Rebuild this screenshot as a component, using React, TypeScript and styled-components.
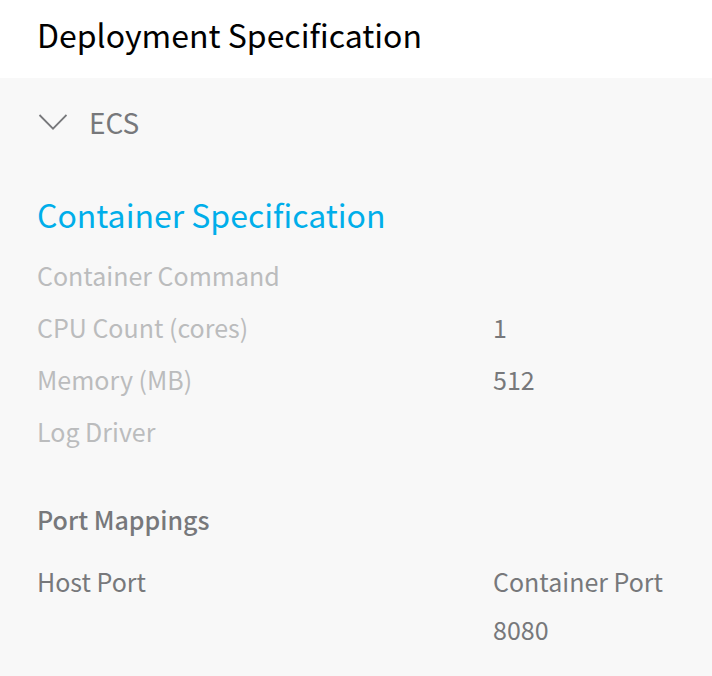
import React, { useState } from "react";
import styled, { createGlobalStyle } from "styled-components";

const GlobalStyle = createGlobalStyle`
  * { box-sizing: border-box; }
  body {
    margin: 0;
    background: #f8f8f8;
    color: #77787b;
    font-family: "Noto Sans CJK SC", "Noto Sans", sans-serif;
    font-size: 25px;
  }
`;

const Header = styled.header`
  padding: 0 37px 10px;
  background: #ffffff;
`;

const Title = styled.h1`
  margin: 0;
  color: #000000;
  font-size: 32px;
  font-weight: 400;
  line-height: 68px;
`;

const Panel = styled.main`
  padding: 22px 37px 20px;
`;

const Toggle = styled.button`
  display: flex;
  align-items: center;
  gap: 22px;
  padding: 0;
  border: 0;
  background: none;
  color: inherit;
  font: inherit;
  font-size: 28px;
  line-height: 44px;
  cursor: pointer;
`;

const Chevron = styled.svg<{ $open: boolean }>`
  width: 30px;
  height: 18px;
  transform: ${(p) => (p.$open ? "none" : "rotate(-90deg)")};
`;

const SectionTitle = styled.h2`
  margin: 44px 0 9px;
  color: #00aeea;
  font-size: 32px;
  font-weight: 400;
  line-height: 52px;
`;

const Specs = styled.dl`
  margin: 0;
`;

const SpecRow = styled.div`
  display: grid;
  grid-template-columns: 456px 1fr;
  line-height: 52px;
`;

const SpecLabel = styled.dt`
  color: #bbbcbd;
`;

const SpecValue = styled.dd`
  margin: 0;
`;

const PortsTitle = styled.h3`
  margin: 36px 0 12px;
  font-size: 25px;
  font-weight: 500;
  line-height: 52px;
`;

const PortsTable = styled.table`
  width: 100%;
  border-collapse: collapse;
  table-layout: fixed;
  line-height: 48px;
`;

const Cell = styled.td`
  padding: 0;
`;

const HeadCell = styled.th`
  padding: 0;
  font-weight: 400;
  text-align: left;
  &:first-child { width: 456px; }
`;

const specs = [
  { label: "Container Command", value: "" },
  { label: "CPU Count (cores)", value: "1" },
  { label: "Memory (MB)", value: "512" },
  { label: "Log Driver", value: "" },
];

const ports = [{ host: "", container: "8080" }];

export default function App() {
  const [open, setOpen] = useState(true);
  return (
    <>
      <GlobalStyle />
      <Header>
        <Title>Deployment Specification</Title>
      </Header>
      <Panel>
        <Toggle type="button" aria-expanded={open} onClick={() => setOpen(!open)}>
          <Chevron $open={open} viewBox="0 0 30 18" fill="none" stroke="currentColor" strokeWidth="1.8" aria-hidden="true">
            <path d="M2.5 2 16 15.6 29.5 2" />
          </Chevron>
          ECS
        </Toggle>
        {open && (
          <section>
            <SectionTitle>Container Specification</SectionTitle>
            <Specs>
              {specs.map((s) => (
                <SpecRow key={s.label}>
                  <SpecLabel>{s.label}</SpecLabel>
                  <SpecValue>{s.value}</SpecValue>
                </SpecRow>
              ))}
            </Specs>
            <PortsTitle>Port Mappings</PortsTitle>
            <PortsTable>
              <thead>
                <tr>
                  <HeadCell>Host Port</HeadCell>
                  <HeadCell>Container Port</HeadCell>
                </tr>
              </thead>
              <tbody>
                {ports.map((p) => (
                  <tr key={p.container}>
                    <Cell>{p.host}</Cell>
                    <Cell>{p.container}</Cell>
                  </tr>
                ))}
              </tbody>
            </PortsTable>
          </section>
        )}
      </Panel>
    </>
  );
}
